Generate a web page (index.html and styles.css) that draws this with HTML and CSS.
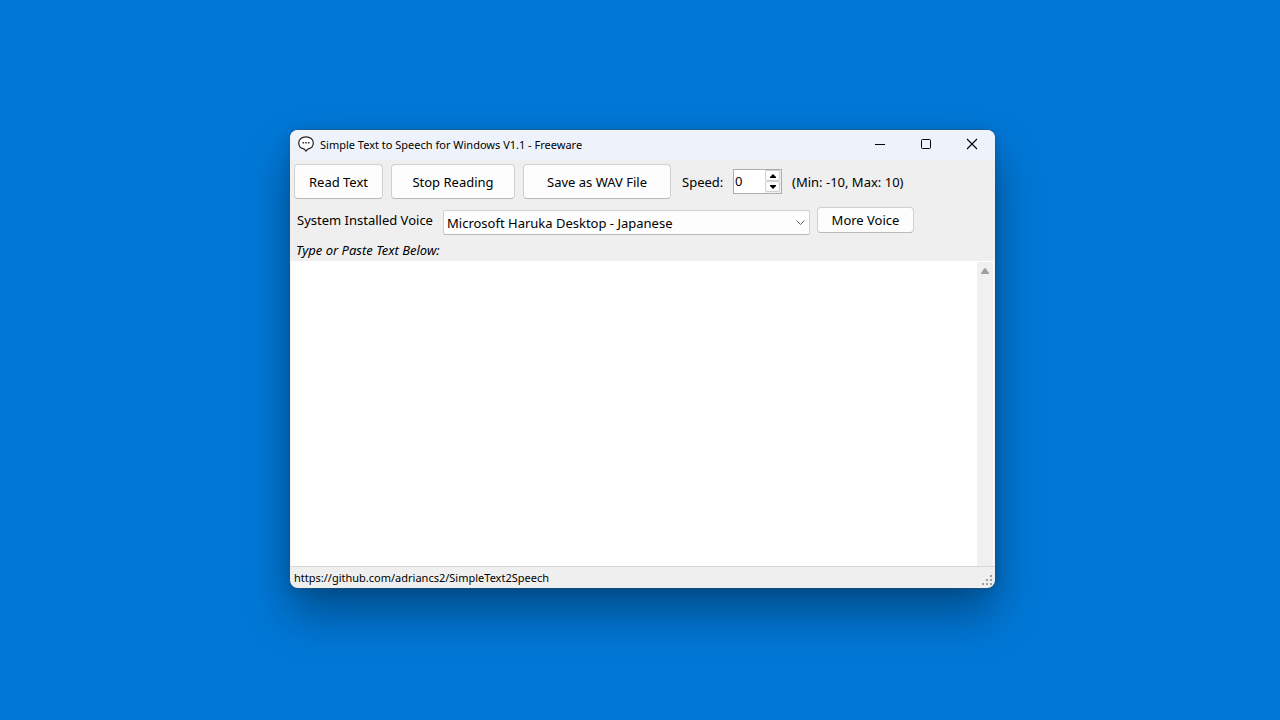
FILE: index.html
```html
<!DOCTYPE html>
<html lang="en">
<head>
    <meta charset="UTF-8">
    <meta name="viewport" content="width=device-width, initial-scale=1.0">
    <title>Simple Text to Speech for Windows</title>
    <link rel="stylesheet" href="styles.css">
</head>
<body>
    <main class="window">
        <header class="titlebar">
            <svg class="app-icon" width="16" height="16" viewBox="0 0 16 16" aria-hidden="true">
                <path d="M8 .8C3.900.8.7 3.400.7 7c0 3.200 2.400 5.500 5.600 6.100L8 15.200l1.700-2.100c3.200-.6 5.600-2.900 5.600-6.100C15.300 3.400 12.100.8 8 .8z" fill="#fff" stroke="#222" stroke-width="1.200" stroke-linejoin="round"/>
                <path d="M4.500 6h1.600v1.600H4.500zM7.200 6h1.600v1.600H7.200zM9.900 6h1.600v1.600H9.900z" fill="#333"/>
            </svg>
            <h1>Simple Text to Speech for Windows V1.1 - Freeware</h1>
            <div class="window-buttons">
                <button type="button" aria-label="Minimize">
                    <svg width="12" height="12" viewBox="0 0 12 12"><path d="M1 6.500h10" stroke="#000"/></svg>
                </button>
                <button type="button" aria-label="Maximize">
                    <svg width="12" height="12" viewBox="0 0 12 12"><rect x="1.500" y="1.500" width="9" height="9" rx="1" fill="none" stroke="#000"/></svg>
                </button>
                <button type="button" aria-label="Close">
                    <svg width="12" height="12" viewBox="0 0 12 12"><path d="M1 1l10 10M11 1L1 11" stroke="#000" stroke-width="1.100"/></svg>
                </button>
            </div>
        </header>

        <div class="toolbar">
            <button type="button" class="btn btn-read">Read Text</button>
            <button type="button" class="btn btn-stop">Stop Reading</button>
            <button type="button" class="btn btn-save">Save as WAV File</button>
            <label class="speed-label" for="speed">Speed:</label>
            <div class="spinner">
                <input type="number" id="speed" min="-10" max="10" value="0">
                <div class="spinner-buttons">
                    <button type="button" aria-label="Increase speed" onclick="speed.stepUp()">
                        <svg width="6" height="4" viewBox="0 0 6 4"><path d="M0 4V3L3 0l3 3v1z"/></svg>
                    </button>
                    <button type="button" aria-label="Decrease speed" onclick="speed.stepDown()">
                        <svg width="6" height="4" viewBox="0 0 6 4"><path d="M0 0h6v1L3 4 0 1z"/></svg>
                    </button>
                </div>
            </div>
            <span class="hint">(Min: -10, Max: 10)</span>
        </div>

        <div class="voice-row">
            <label for="voice">System Installed Voice</label>
            <select id="voice" class="voice-select">
                <option>Microsoft Haruka Desktop - Japanese</option>
            </select>
            <button type="button" class="btn btn-more">More Voice</button>
        </div>

        <label class="text-label" for="text">Type or Paste Text Below:</label>

        <div class="editor">
            <textarea id="text"></textarea>
            <div class="scrollbar">
                <svg width="8" height="6" viewBox="0 0 8 6"><path d="M3.200.5Q4-.4 4.800.5L8 5v1H0V5z" fill="#a0a0a0"/></svg>
            </div>
        </div>

        <footer class="statusbar">
            <a href="https://github.com/adriancs2/SimpleText2Speech">https://github.com/adriancs2/SimpleText2Speech</a>
            <svg class="grip" width="10" height="10" viewBox="0 0 10 10" aria-hidden="true">
                <path d="M8 0h2v2H8zM4 4h2v2H4zM8 4h2v2H8zM0 8h2v2H0zM4 8h2v2H4zM8 8h2v2H8z" fill="#a0a0a0"/>
            </svg>
        </footer>
    </main>
</body>
</html>
```
FILE: styles.css
```css
* {
    box-sizing: border-box;
}
body {
    display: flex;
    min-height: 100vh;
    margin: 0;
    padding: 130px 285px 132px 290px;
    background-color: #0078d7;
    font-family: "Noto Sans", "Open Sans", sans-serif;
    font-size: 13px;
    color: #000;
}
button, input, select, textarea {
    font: inherit;
    color: inherit;
}
.window {
    display: flex;
    flex: 1;
    flex-direction: column;
    overflow: hidden;
    border-radius: 8px;
    background-color: #efefef;
    box-shadow: 0 0 1px 1px rgba(60, 80, 100, 0.4), 0 26px 48px rgba(0, 0, 0, 0.36), 0 2px 16px rgba(0, 0, 0, 0.12);
}

/* Title bar */
.titlebar {
    display: flex;
    align-items: center;
    height: 30px;
    padding: 0 0 2px 8px;
    background-color: #eef3fb;
}
h1 {
    flex: 1;
    margin: 0 0 0 6px;
    font-size: 11px;
    font-weight: normal;
    white-space: nowrap;
}
.window-buttons {
    display: flex;
}
.window-buttons button {
    display: flex;
    align-items: center;
    justify-content: center;
    width: 46px;
    height: 28px;
    padding: 0;
    border: none;
    background: none;
}

/* Controls */
.btn {
    padding: 0;
    border: 1px solid #d0d0d0;
    border-bottom-color: #b8b8b8;
    border-radius: 4px;
    background-color: #fdfdfd;
    white-space: nowrap;
}
.toolbar {
    display: flex;
    align-items: center;
    gap: 8px;
    height: 43px;
    padding: 0 4px;
}
.toolbar .btn {
    height: 35px;
}
.btn-read {
    width: 89px;
}
.btn-stop {
    width: 124px;
}
.btn-save {
    width: 148px;
}
.speed-label {
    width: 43px;
    margin-left: 3px;
}
.spinner {
    display: flex;
    width: 49px;
    height: 25px;
    border: 1px solid #abadb3;
    background-color: #fff;
}
.spinner input {
    flex: 1;
    min-width: 0;
    padding: 0 1px 2px;
    border: none;
    outline: none;
    background: none;
    appearance: textfield;
}
.spinner-buttons {
    display: flex;
    flex-direction: column;
    width: 16px;
    padding: 0 1px 1px 0;
    background-color: #f0f0f0;
}
.spinner-buttons button {
    display: flex;
    flex: 1;
    align-items: center;
    justify-content: center;
    padding: 0;
    border: 1px solid #d0d0d0;
    border-radius: 2px;
    background-color: #fdfdfd;
}
.hint {
    margin-left: 2px;
}
.voice-row {
    display: flex;
    align-items: flex-start;
    height: 37px;
    padding: 4px 7px 0;
}
.voice-row label {
    width: 146px;
    line-height: 26px;
}
.voice-select {
    width: 367px;
    height: 25px;
    margin: 3px 7px 0 0;
    padding: 0 20px 0 3px;
    border: 1px solid #d0d0d0;
    border-bottom-color: #b8b8b8;
    border-radius: 2px;
    appearance: none;
    background: #fdfdfd url("data:image/svg+xml,%3Csvg xmlns='http://www.w3.org/2000/svg' width='9' height='6'%3E%3Cpath d='M.5.5l4 4 4-4' fill='none' stroke='%23606060'/%3E%3C/svg%3E") no-repeat right 4px center;
}
.btn-more {
    width: 97px;
    height: 26px;
}
.text-label {
    padding-left: 6px;
    font-style: italic;
    line-height: 20px;
}

/* Text area */
.editor {
    display: flex;
    flex: 1;
    margin: 1px 1px 0;
    border-right: 1px solid #fff;
    background-color: #fff;
}
.editor textarea {
    flex: 1;
    padding: 2px;
    border: none;
    outline: none;
    resize: none;
    background: none;
}
.scrollbar {
    display: flex;
    justify-content: center;
    width: 16px;
    margin-top: 1px;
    padding-top: 6px;
    background-color: #f0f0f0;
}

/* Status bar */
.statusbar {
    display: flex;
    align-items: center;
    justify-content: space-between;
    height: 22px;
    padding: 0 3px 0 4px;
    border-top: 1px solid #d7d7d7;
    font-size: 11px;
}
.statusbar a {
    color: inherit;
    text-decoration: none;
}
.grip {
    align-self: flex-end;
    margin-bottom: 3px;
}
```
